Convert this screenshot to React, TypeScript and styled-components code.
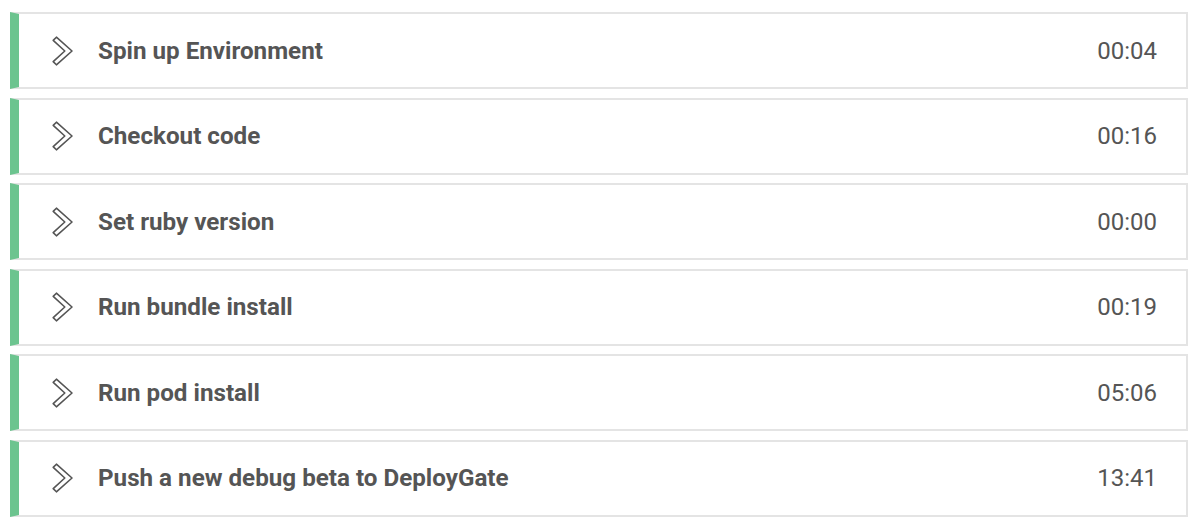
import React from "react";
import styled, { createGlobalStyle } from "styled-components";

const Global = createGlobalStyle`
  html, body { margin: 0; padding: 0; background: #ffffff; }
  body { font-family: Roboto, "Liberation Sans", Arial, sans-serif; }
`;

const List = styled.div`
  display: flex;
  flex-direction: column;
  gap: 8.6px;
  padding: 12px 12px 0 10px;
`;

const Row = styled.div`
  display: flex;
  align-items: center;
  height: 77px;
  box-sizing: border-box;
  border: 2px solid #e4e4e4;
  border-left: 9px solid #6cc48f;
  background: #fff;
  padding: 0 29px 0 33px;
  color: #555555;
`;

const Chevron = styled.svg`
  flex: none;
  width: 22px;
  height: 30px;
  margin-right: 24px;
`;

const Title = styled.span`
  flex: 1;
  font-size: 24.2px;
  font-weight: 700;
`;

const Time = styled.span`
  font-size: 24px;
  font-weight: 400;
`;

const steps = [
  { name: "Spin up Environment", time: "00:04" },
  { name: "Checkout code", time: "00:16" },
  { name: "Set ruby version", time: "00:00" },
  { name: "Run bundle install", time: "00:19" },
  { name: "Run pod install", time: "05:06" },
  { name: "Push a new debug beta to DeployGate", time: "13:41" },
];

const ChevronIcon = () => (
  <Chevron viewBox="0 0 22 30">
    <path
      d="M1.2 4.4 L4.4 1.2 L20 15 L4.4 28.8 L1.2 25.6 L12.8 15 Z"
      fill="#fff"
      stroke="#555"
      strokeWidth="1.6"
      strokeLinejoin="round"
    />
  </Chevron>
);

export default function App() {
  return (
    <>
      <Global />
      <List>
        {steps.map((s) => (
          <Row key={s.name}>
            <ChevronIcon />
            <Title>{s.name}</Title>
            <Time>{s.time}</Time>
          </Row>
        ))}
      </List>
    </>
  );
}
